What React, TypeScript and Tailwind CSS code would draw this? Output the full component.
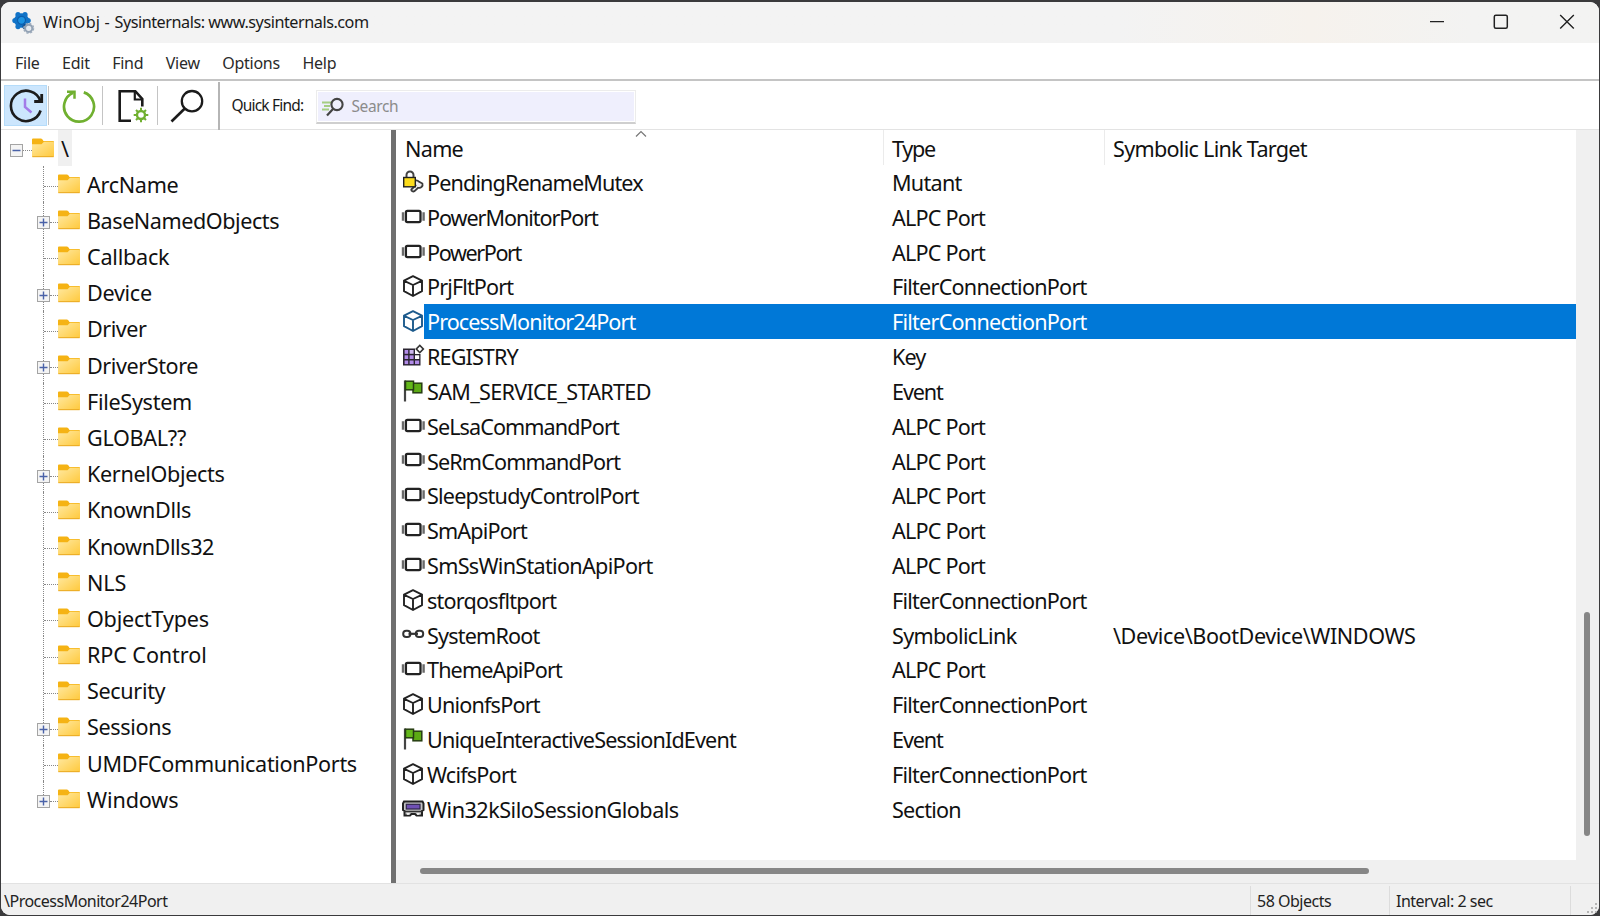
import React from "react";

const children: [string, boolean, string][] = [
  ["ArcName", false, "tracking-[-0.3px]"],
  ["BaseNamedObjects", true, "tracking-[-0.45px]"],
  ["Callback", false, "tracking-[-0.23px]"],
  ["Device", true, "tracking-[-0.3px]"],
  ["Driver", false, "tracking-[-0.5px]"],
  ["DriverStore", true, "tracking-[-0.42px]"],
  ["FileSystem", false, "tracking-[-0.3px]"],
  ["GLOBAL??", false, "tracking-[-0.3px]"],
  ["KernelObjects", true, "tracking-[-0.34px]"],
  ["KnownDlls", false, "tracking-[-0.32px]"],
  ["KnownDlls32", false, "tracking-[-0.42px]"],
  ["NLS", false, "tracking-[-0.1px]"],
  ["ObjectTypes", false, "tracking-[-0.24px]"],
  ["RPC Control", false, "tracking-[-0.1px]"],
  ["Security", false, "tracking-[-0.35px]"],
  ["Sessions", true, "tracking-[-0.35px]"],
  ["UMDFCommunicationPorts", false, "tracking-[-0.33px]"],
  ["Windows", true, "tracking-[-0.12px]"],
];

type Kind = "mutex" | "port" | "cube" | "key" | "event" | "link" | "section";

const objects: [Kind, string, string, string, string?][] = [
  ["mutex", "PendingRenameMutex", "Mutant", "tracking-[-0.87px]"],
  ["port", "PowerMonitorPort", "ALPC Port", "tracking-[-1.07px]"],
  ["port", "PowerPort", "ALPC Port", "tracking-[-1.4px]"],
  ["cube", "PrjFltPort", "FilterConnectionPort", "tracking-[-0.88px]"],
  ["cube", "ProcessMonitor24Port", "FilterConnectionPort", "tracking-[-0.92px]"],
  ["key", "REGISTRY", "Key", "tracking-[-0.9px]"],
  ["event", "SAM_SERVICE_STARTED", "Event", "tracking-[-0.7px]"],
  ["port", "SeLsaCommandPort", "ALPC Port", "tracking-[-0.92px]"],
  ["port", "SeRmCommandPort", "ALPC Port", "tracking-[-0.87px]"],
  ["port", "SleepstudyControlPort", "ALPC Port", "tracking-[-0.8px]"],
  ["port", "SmApiPort", "ALPC Port", "tracking-[-0.85px]"],
  ["port", "SmSsWinStationApiPort", "ALPC Port", "tracking-[-0.7px]"],
  ["cube", "storqosfltport", "FilterConnectionPort", "tracking-[-0.79px]"],
  ["link", "SystemRoot", "SymbolicLink", "tracking-[-0.82px]", "\\Device\\BootDevice\\WINDOWS"],
  ["port", "ThemeApiPort", "ALPC Port", "tracking-[-0.88px]"],
  ["cube", "UnionfsPort", "FilterConnectionPort", "tracking-[-0.82px]"],
  ["event", "UniqueInteractiveSessionIdEvent", "Event", "tracking-[-0.85px]"],
  ["cube", "WcifsPort", "FilterConnectionPort", "tracking-[-0.8px]"],
  ["section", "Win32kSiloSessionGlobals", "Section", "tracking-[-0.5px]"],
];

const typeTracking: Record<string, string> = {
  Mutant: "tracking-[-0.73px]",
  "ALPC Port": "tracking-[-0.8px]",
  FilterConnectionPort: "tracking-[-0.76px]",
  Key: "tracking-[-0.9px]",
  Event: "tracking-[-1.1px]",
  SymbolicLink: "tracking-[-0.68px]",
  Section: "tracking-[-0.75px]",
};

function ObjectIcon({ kind, selected }: { kind: Kind; selected: boolean }) {
  const ink = selected ? "#1c5a8c" : "#222";
  return (
    <svg width="24" height="24" viewBox="0 0 24 24" fill="none" className="-mt-px shrink-0">
      {kind === "port" && (
        <>
          <rect x="4.9" y="5.9" width="14.6" height="11.2" rx="1.5" fill="#fff" stroke="#222" strokeWidth="2.3" />
          <path d="M2 7.3v8.4M22.6 7.3v8.4" stroke="#6a6a6a" strokeWidth="2.4" />
        </>
      )}
      {kind === "cube" && (
        <path
          d="M12 2.2 21 6.6v10.6L12 22 3 17.2V6.6zM3.2 6.8 12 11l8.8-4.2M12 11v11"
          fill="#fff"
          stroke={ink}
          strokeWidth="1.9"
          strokeLinejoin="round"
        />
      )}
      {kind === "mutex" && (
        <>
          <path d="M5.500 8V5a3.500 3.500 0 0 1 7 0v3" stroke="#444" strokeWidth="2" />
          <path
            d="M12 12.200c2-2.700 4.500-2.200 6.200-.4l3.200 1.700c.8 2.500-1.300 5-4.300 4.300l-3.500 3.300c-1.500 1-3.500 0-3.300-1.600l4.300-4c-.5-1.500-1-2.200-2.600-3.300z"
            fill="#ececec"
            stroke="#3a3a3a"
            strokeWidth="1.800"
          />
          <rect x="2.700" y="7.500" width="11.600" height="9.300" fill="#fcdc1c" stroke="#222" strokeWidth="1.400" />
        </>
      )}
      {kind === "key" && (
        <>
          <rect x="2" y="4.500" width="17.500" height="17" fill="#2a2430" />
          <g fill="#b18be8">
            <rect x="3.600" y="6" width="3.6" height="3.800" />
            <rect x="8.600" y="6" width="4" height="3.800" fill="#cdb8ef" />
            <rect x="3.600" y="11.300" width="3.6" height="3.700" />
            <rect x="8.600" y="11.300" width="4" height="3.700" />
            <rect x="14" y="11.300" width="4.200" height="3.700" fill="#fff" />
            <rect x="3.600" y="16.500" width="3.600" height="3.600" />
            <rect x="8.600" y="16.500" width="4" height="3.600" />
            <rect x="14" y="16.500" width="4.200" height="3.600" />
          </g>
          <path d="M14 3h7v7h-7z" fill="#fff" />
          <rect x="16.300" y="2.500" width="5" height="5" transform="rotate(45 18.800 5)" fill="#fff" stroke="#333" strokeWidth="1.600" />
        </>
      )}
      {kind === "event" && (
        <>
          <path d="M4 1.500v21" stroke="#444" strokeWidth="2.200" />
          <rect x="12" y="4.200" width="8.800" height="9.600" fill="#5cab14" stroke="#263d12" strokeWidth="1.500" />
          <rect x="4.500" y="2.200" width="8" height="8.600" fill="#63b81a" stroke="#263d12" strokeWidth="1.500" />
        </>
      )}
      {kind === "link" && (
        <>
          <rect x="2.200" y="8.700" width="7.200" height="6.200" rx="3" stroke="#333" strokeWidth="2" />
          <rect x="14.800" y="8.700" width="7.400" height="6.200" rx="3" stroke="#333" strokeWidth="2" />
          <path d="M7.500 11.800h9.500" stroke="#333" strokeWidth="2.200" />
        </>
      )}
      {kind === "section" && (
        <>
          <path
            d="M3 4.500h18.500l1 2v6.500l-1.500 1v4.500h-5.500l-1.500-1.500h-3.500L9 18.500H3.500V14L2 13V6.500z"
            fill="#c4c4c4"
            stroke="#222"
            strokeWidth="2"
          />
          <rect x="5.300" y="7.300" width="13.700" height="4.700" fill="#6f50b4" stroke="#30264a" strokeWidth="1.200" />
          <path d="M3 14.500h18.500" stroke="#333" strokeWidth="1.500" />
          <path d="M6 17h2.500M16 17h2.500" stroke="#fff" strokeWidth="1.300" />
        </>
      )}
    </svg>
  );
}

function Folder() {
  return (
    <svg width="22" height="20" viewBox="0 0 22 20" className="shrink-0">
      <defs>
        <linearGradient id="folder" x1="0" y1="0" x2="1" y2="1">
          <stop offset="0" stopColor="#ffe9a2" />
          <stop offset="1" stopColor="#ffc93c" />
        </linearGradient>
      </defs>
      <path d="M0 1.500Q0 .5 1 .5h7.800q.8 0 1.300.6L11.500 3H21q1 0 1 1v6H0z" fill="#f5b314" />
      <path d="M0 6.300h9.500L12 3.700h9q1 0 1 1V18q0 1-1 1H1q-1 0-1-1z" fill="url(#folder)" />
      <path d="M.3 18.700h21.400" stroke="#e9a820" strokeWidth="1" />
    </svg>
  );
}

function Toggle({ open }: { open: boolean }) {
  return (
    <svg width="13" height="13" viewBox="0 0 13 13" className="shrink-0">
      <rect x=".5" y=".5" width="12" height="12" fill="#f4f4f4" stroke="#a4a4a4" />
      <path d={open ? "M2.500 6.500h8" : "M2.500 6.500h8M6.500 2.500v8"} stroke="#4a62a8" strokeWidth="1.400" />
    </svg>
  );
}

function AppIcon() {
  return (
    <svg width="23" height="24" viewBox="0 0 23 24">
      <g fill="#1173c7">
        <circle cx="9.500" cy="9.500" r="7.300" />
        <circle cx="6" cy="3.600" r="2.600" />
        <circle cx="13" cy="3.600" r="2.600" />
        <circle cx="2.900" cy="9.600" r="2.600" />
        <circle cx="16.200" cy="9.600" r="2.600" />
        <circle cx="6" cy="15.600" r="2.600" />
        <circle cx="13" cy="15.600" r="2.600" fill="#0c4f94" />
      </g>
      <circle cx="9.500" cy="9.300" r="4" fill="#1c93e2" stroke="#0d5dab" strokeWidth="1.200" />
      <circle cx="16.700" cy="17.300" r="3.600" fill="#e6eaef" stroke="#93a2b4" strokeWidth="2" />
      <circle cx="16.700" cy="17.300" r="4.900" fill="none" stroke="#9dabbb" strokeWidth="1.300" strokeDasharray="2.200 1.650" />
    </svg>
  );
}

function TitleBar() {
  return (
    <div className="flex h-[41px] shrink-0 items-center bg-linear-to-r from-[#f3f3f3] from-70% via-[#f6f2ed] via-82% to-[#f3f3f2] to-92% pl-[11px]">
      <AppIcon />
      <span className="ml-[8px] grow text-[16.200px] tracking-[-0.46px] text-[#1a1a1a]">
        <span className="tracking-[0.2px]">WinObj - </span>Sysinternals: www.sysinternals.com
      </span>
      <svg width="170" height="41" viewBox="0 0 170 41" fill="none" stroke="#222" className="shrink-0">
        <path d="M1 19.700h14" strokeWidth="1.200" />
        <rect x="65.300" y="13.300" width="13" height="13" rx="1.500" strokeWidth="1.500" />
        <path d="m131.200 13 13.600 13.600M144.800 13l-13.600 13.600" strokeWidth="1.400" />
      </svg>
    </div>
  );
}

function Toolbar() {
  return (
    <div className="flex h-[49px] shrink-0 items-center border-b border-[#e3e3e3] bg-white pt-px">
      <div className="ml-[3px] flex h-[41px] w-[43px] items-center justify-center border border-[#b5dcfa] bg-[#cce6fd]">
        <svg width="36" height="36" viewBox="0 0 36 36" fill="none" className="shrink-0">
          <path d="M32.600 22.500A15.200 15.200 0 1 1 32.500 13" stroke="#1b1b1b" strokeWidth="2.600" />
          <path d="M33.700 6v7.500h-7.500" stroke="#1b1b1b" strokeWidth="2.800" />
          <path d="M17 10.500v8.500l6.500 5.500" stroke="#a37be8" strokeWidth="2.500" />
        </svg>
      </div>
      <div className="ml-[1px] h-[39px] w-px bg-[#c4c4c4]" />
      <div className="flex w-[53px] justify-center pl-[6px]">
        <svg width="36" height="36" viewBox="0 0 36 36" fill="none">
          <path d="M22.800 4.400a15 15 0 1 1-10.600.4" stroke="#70b030" strokeWidth="2.700" />
          <path d="M6 3.800h7.500v7" stroke="#70b030" strokeWidth="2.500" />
        </svg>
      </div>
      <div className="h-[39px] w-px bg-[#c4c4c4]" />
      <div className="flex w-[54px] justify-center pl-[6px]">
        <svg width="32" height="36" viewBox="0 0 32 36" fill="none">
          <path d="M14 32.800H2.700V3.200h15.600l7 7.800V18.500" stroke="#1b1b1b" strokeWidth="2.600" />
          <path d="M17.800 3.500v8h7.700" stroke="#1b1b1b" strokeWidth="2.200" />
          <circle cx="24" cy="27" r="4" stroke="#70b030" strokeWidth="2.400" />
          <path
            d="M24 23v-3.300M24 31v3.300M20 27h-3.300M28 27h3.300M21.300 24.300 19 22M26.700 29.700 29 32M21.300 29.700 19 32M26.700 24.300 29 22"
            stroke="#70b030"
            strokeWidth="2"
          />
        </svg>
      </div>
      <div className="h-[39px] w-px bg-[#c4c4c4]" />
      <div className="flex w-[60px] justify-center pr-[3px]">
        <svg width="36" height="36" viewBox="0 0 36 36" fill="none" stroke="#1b1b1b">
          <circle cx="23" cy="13.200" r="10.200" strokeWidth="2.300" />
          <path d="M15.800 20.500 2.500 33.500" strokeWidth="2.600" />
        </svg>
      </div>
      <div className="h-[48px] w-[1.500px] bg-[#b5b5b5]" />
      <span className="mt-[1px] ml-[12px] w-[84px] whitespace-nowrap text-[15.500px] tracking-[-0.82px] text-[#1a1a1a]">Quick Find:</span>
      <div className="mt-[3px] h-[34px] w-[320px] border border-b-2 border-[#ececec] border-b-[#cfcfcf] bg-white p-px">
        <div className="flex h-full items-center bg-[#efeffd] pl-[3px]">
          <svg width="24" height="20" viewBox="0 0 24 20" fill="none">
            <path d="M1 5.500h9M3 9h6M1 12.500h7" stroke="#a5cd82" strokeWidth="2.200" />
            <circle cx="16" cy="7.500" r="5.600" stroke="#444" strokeWidth="2.100" />
            <path d="m12 12-6 6.500" stroke="#444" strokeWidth="2.200" />
          </svg>
          <span className="mt-px ml-[7px] text-[15.500px] tracking-[-0.4px] text-[#8b8b8b]">Search</span>
        </div>
      </div>
    </div>
  );
}

function Tree() {
  return (
    <div className="w-[390px] shrink-0 overflow-hidden bg-white text-[21.600px] text-[#111]">
      <div className="flex h-[36px] items-center">
        <div className="mt-[4px] ml-[9px] flex items-center">
          <Toggle open />
          <div className="w-[9px] border-t border-dotted border-[#888]" />
        </div>
        <div className="-mt-[1px]">
          <Folder />
        </div>
        <div className="ml-[4px] flex h-full w-[14px] items-center justify-center bg-[#f0f0f0] pt-[2px]">\</div>
      </div>
      {children.map(([name, expandable, tracking], i) => (
        <div key={name} className="flex h-[36.200px] items-center">
          <div className="relative ml-[36px] flex h-full w-[21px] items-center pt-[5px]">
            <div
              className={
                i === children.length - 1
                  ? "absolute top-0 left-[6px] h-[20px] border-l border-dotted border-[#888]"
                  : "absolute top-0 left-[6px] h-full border-l border-dotted border-[#888]"
              }
            />
            {expandable ? (
              <div className="relative flex w-full items-center">
                <Toggle open={false} />
                <div className="grow border-t border-dotted border-[#888]" />
              </div>
            ) : (
              <div className="ml-[7px] grow border-t border-dotted border-[#888]" />
            )}
          </div>
          <Folder />
          <span className={`ml-[7px] pt-[1.500px] whitespace-nowrap ${tracking}`}>{name}</span>
        </div>
      ))}
    </div>
  );
}

function ObjectList() {
  return (
    <div className="flex min-w-0 grow flex-col bg-white text-[21.600px] text-[#111]">
      <div className="relative flex h-[35px] shrink-0 items-center">
        <svg width="12" height="8" viewBox="0 0 12 8" fill="none" className="absolute top-0 left-[239px]">
          <path d="m1 6.500 5-5 5 5" stroke="#777" strokeWidth="1.200" />
        </svg>
        <span className="w-[487px] pt-[3px] pl-[9px] tracking-[-0.7px]">Name</span>
        <div className="flex h-full w-[221px] items-center border-l border-[#ebebeb] pt-[3px] pl-[8px] tracking-[-1.3px]">Type</div>
        <div className="flex h-full items-center border-l border-[#ebebeb] pt-[3px] pl-[8px] tracking-[-0.72px]">Symbolic Link Target</div>
      </div>
      {objects.map(([kind, name, type, tracking, target]) => {
        const selected = name === "ProcessMonitor24Port";
        return (
          <div key={name} className="flex h-[34.820px] shrink-0 items-center whitespace-nowrap">
            <div className="w-[28px] pl-[5px]">
              <ObjectIcon kind={kind} selected={selected} />
            </div>
            <div className={selected ? "flex h-full grow items-center bg-[#0078d7] pt-[1.600px] text-white" : "flex h-full grow items-center pt-[1.600px]"}>
              <span className={`w-[468px] pl-[3px] ${tracking}`}>{name}</span>
              <span className={`w-[221px] ${typeTracking[type]}`}>{type}</span>
              <span className="tracking-[-0.42px]">{target}</span>
            </div>
          </div>
        );
      })}
    </div>
  );
}

export default function App() {
  return (
    <div className="h-[916px] w-[1600px] overflow-hidden bg-[#3a3a3c] pt-[2px] pr-[1px] pb-[1px] pl-[1px] font-['Noto_Sans',sans-serif]">
      <div className="flex h-full flex-col overflow-hidden rounded-[9px] bg-white">
        <TitleBar />
        <div className="flex h-[38px] shrink-0 items-center gap-[22.500px] border-b-2 border-[#c4c4c4] pt-[3px] pl-[14px] text-[16px] tracking-[-0.26px] text-[#2a2a2a]">
          {["File", "Edit", "Find", "View", "Options", "Help"].map((m) => (
            <span key={m}>{m}</span>
          ))}
        </div>
        <Toolbar />
        <div className="flex min-h-0 grow">
          <Tree />
          <div className="w-[5px] shrink-0 bg-[#707070]" />
          <div className="flex min-w-0 grow flex-col">
            <div className="flex min-h-0 grow">
              <ObjectList />
              <div className="w-[23px] shrink-0 bg-[#f0f0f0] pt-[482px] pl-[8px]">
                <div className="h-[224px] w-[6px] rounded-[3px] bg-[#868686]" />
              </div>
            </div>
            <div className="h-[23px] shrink-0 bg-[#f0f0f0] pt-[8px] pl-[24px]">
              <div className="h-[6px] w-[949px] rounded-[3px] bg-[#868686]" />
            </div>
          </div>
        </div>
        <div className="flex h-[32px] shrink-0 border-t border-[#e2e2e2] bg-[#f0f0f0] pt-[2px] text-[16px] tracking-[-0.5px] text-[#222]">
          <span className="flex w-[1249px] items-center pl-[3px]">\ProcessMonitor24Port</span>
          <span className="flex w-[139px] items-center border-l border-[#dcdcdc] pl-[6px]">58 Objects</span>
          <span className="flex w-[181px] items-center border-l border-[#dcdcdc] pl-[6px]">Interval: 2 sec</span>
          <span className="flex grow items-end justify-end border-l border-[#dcdcdc]">
            <svg width="12" height="12" viewBox="0 0 12 12" fill="#b5b5b5">
              <path d="M0 8h2v2H0zM4 8h2v2H4zM8 8h2v2H8zM4 4h2v2H4zM8 4h2v2H8zM8 0h2v2H8z" />
            </svg>
          </span>
        </div>
      </div>
    </div>
  );
}
